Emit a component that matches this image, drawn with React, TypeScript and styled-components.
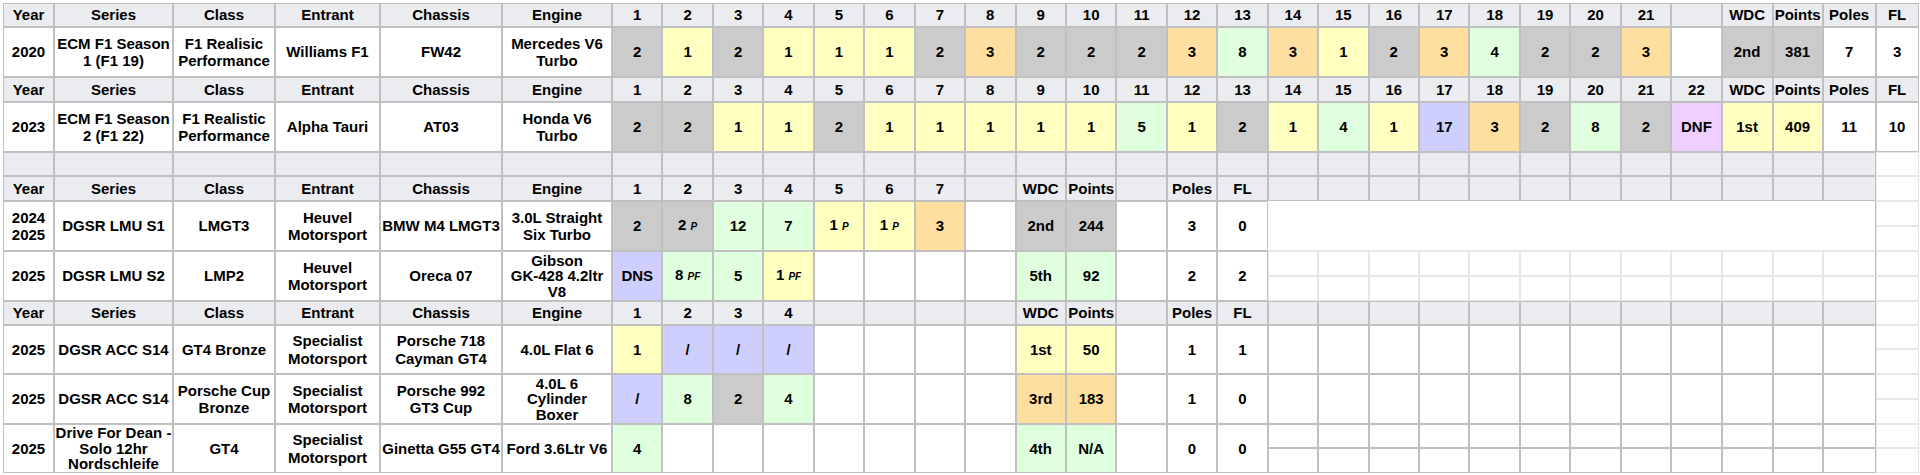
import React from "react";
import styled, { createGlobalStyle, css } from "styled-components";

type Tone = "none" | "head" | "gold" | "silver" | "bronze" | "green" | "purple" | "pink";
type Line = "dark" | "light" | "open";
type Res = [string, Tone, string?];

const tones: Record<Tone, string> = {
  none: "#ffffff",
  head: "#eaecf0",
  gold: "#ffffbf",
  silver: "#cbcbcb",
  bronze: "#ffdf9f",
  green: "#dfffdf",
  purple: "#cfcfff",
  pink: "#efcfff",
};

const DARK = "#c0c0c0";
const LIGHT = "#e7e7e7";

// column widths: info columns, 22 rounds, then WDC / Points / Poles / FL
const COLS = [51, 119, 102, 105, 122, 110, ...Array(22).fill(50.45), 51, 50, 53, 43];
// data rows take two grid rows, so the loose grid on the right can show its half rows
const ROWS = [24, 25, 25, 25, 25, 25, 24, 25, 25, 25, 25, 25, 24, 24, 25, 25, 25, 24, 25];

const GlobalStyle = createGlobalStyle`
  html, body {
    margin: 0;
    padding: 0;
    background: #ffffff;
  }
  body {
    font-family: "Liberation Sans", Arial, sans-serif;
  }
`;

const Sheet = styled.div`
  display: grid;
  grid-template-columns: ${COLS.map((w) => `${w}px`).join(" ")};
  grid-template-rows: ${ROWS.map((h) => `${h}px`).join(" ")};
  padding: 3px 0 0 3px;
  width: max-content;
`;

const Cell = styled.div<{
  $c: number;
  $r: number;
  $cs?: number;
  $rs?: number;
  $tone?: Tone;
  $line?: Line;
  $edge?: boolean;
}>`
  grid-column: ${(p) => p.$c} / span ${(p) => p.$cs ?? 1};
  grid-row: ${(p) => p.$r} / span ${(p) => p.$rs ?? 1};
  box-sizing: border-box;
  display: flex;
  align-items: center;
  justify-content: center;
  overflow: hidden;
  padding: 0 1px;
  background: ${(p) => tones[p.$tone ?? "none"]};
  border: 1px solid ${(p) => (p.$line === "light" ? LIGHT : DARK)};
  ${(p) =>
    p.$line === "open" &&
    css`
      border-width: 0 1px 1px 0;
      border-bottom-color: ${LIGHT};
    `}
  ${(p) =>
    p.$edge &&
    css`
      border-right-color: ${DARK};
    `}
`;

const Label = styled.span<{ $tight?: boolean }>`
  text-align: center;
  white-space: pre;
  font-size: 15px;
  font-weight: bold;
  line-height: ${(p) => (p.$tight ? "15.6px" : "17.5px")};
  color: #000000;
`;

const Sup = styled.span`
  font-size: 10px;
  font-style: italic;
  font-weight: bold;
`;

const G = (t: string, sup?: string): Res => [t, "gold", sup];
const S = (t: string, sup?: string): Res => [t, "silver", sup];
const B = (t: string): Res => [t, "bronze"];
const Pt = (t: string, sup?: string): Res => [t, "green", sup];
const NC = (t: string): Res => [t, "purple"];
const Ret = (t: string): Res => [t, "pink"];
const W = (t = ""): Res => [t, "none"];

const rounds = (n: number) => Array.from({ length: n }, (_, i) => String(i + 1));
const INFO_HEAD = ["Year", "Series", "Class", "Entrant", "Chassis", "Engine"];

const lowHead = (n: number) => {
  const r = rounds(n);
  while (r.length < 8) r.push("");
  return [...INFO_HEAD, ...r, "WDC", "Points", "", "Poles", "FL", ...Array(12).fill("")];
};

interface Season {
  row: number;
  info: string[];
  results: Res[];
  fill?: "open" | "light" | "full" | "half";
}

const headers: { row: number; labels: string[] }[] = [
  { row: 1, labels: [...INFO_HEAD, ...rounds(21), "", "WDC", "Points", "Poles", "FL"] },
  { row: 4, labels: [...INFO_HEAD, ...rounds(22), "WDC", "Points", "Poles", "FL"] },
  { row: 7, labels: Array(31).fill("") },
  { row: 8, labels: lowHead(7) },
  { row: 13, labels: lowHead(4) },
];

const seasons: Season[] = [
  {
    row: 2,
    info: ["2020", "ECM F1 Season\n1 (F1 19)", "F1 Realisic\nPerformance", "Williams F1", "FW42", "Mercedes V6\nTurbo"],
    results: [
      S("2"), G("1"), S("2"), G("1"), G("1"), G("1"), S("2"), B("3"), S("2"), S("2"), S("2"),
      B("3"), Pt("8"), B("3"), G("1"), S("2"), B("3"), Pt("4"), S("2"), S("2"), B("3"), W(),
      S("2nd"), S("381"), W("7"), W("3"),
    ],
  },
  {
    row: 5,
    info: ["2023", "ECM F1 Season\n2 (F1 22)", "F1 Realistic\nPerformance", "Alpha Tauri", "AT03", "Honda V6\nTurbo"],
    results: [
      S("2"), S("2"), G("1"), G("1"), S("2"), G("1"), G("1"), G("1"), G("1"), G("1"), Pt("5"),
      G("1"), S("2"), G("1"), Pt("4"), G("1"), NC("17"), B("3"), S("2"), Pt("8"), S("2"), Ret("DNF"),
      G("1st"), G("409"), W("11"), W("10"),
    ],
  },
  {
    row: 9,
    fill: "open",
    info: ["2024\n2025", "DGSR LMU S1", "LMGT3", "Heuvel\nMotorsport", "BMW M4 LMGT3", "3.0L Straight\nSix Turbo"],
    results: [
      S("2"), S("2", "P"), Pt("12"), Pt("7"), G("1", "P"), G("1", "P"), B("3"), W(),
      S("2nd"), S("244"), W(), W("3"), W("0"),
    ],
  },
  {
    row: 11,
    fill: "light",
    info: ["2025", "DGSR LMU S2", "LMP2", "Heuvel\nMotorsport", "Oreca 07", "Gibson\nGK-428 4.2ltr\nV8"],
    results: [
      NC("DNS"), Pt("8", "PF"), Pt("5"), G("1", "PF"), W(), W(), W(), W(),
      Pt("5th"), Pt("92"), W(), W("2"), W("2"),
    ],
  },
  {
    row: 14,
    fill: "full",
    info: ["2025", "DGSR ACC S14", "GT4 Bronze", "Specialist\nMotorsport", "Porsche 718\nCayman GT4", "4.0L Flat 6"],
    results: [
      G("1"), NC("/"), NC("/"), NC("/"), W(), W(), W(), W(),
      G("1st"), G("50"), W(), W("1"), W("1"),
    ],
  },
  {
    row: 16,
    fill: "full",
    info: ["2025", "DGSR ACC S14", "Porsche Cup\nBronze", "Specialist\nMotorsport", "Porsche 992\nGT3 Cup", "4.0L 6\nCylinder\nBoxer"],
    results: [
      NC("/"), Pt("8"), S("2"), Pt("4"), W(), W(), W(), W(),
      B("3rd"), B("183"), W(), W("1"), W("0"),
    ],
  },
  {
    row: 18,
    fill: "half",
    info: ["2025", "Drive For Dean -\nSolo 12hr\nNordschleife", "GT4", "Specialist\nMotorsport", "Ginetta G55 GT4", "Ford 3.6Ltr V6"],
    results: [
      Pt("4"), W(), W(), W(), W(), W(), W(), W(),
      Pt("4th"), Pt("N/A"), W(), W("0"), W("0"),
    ],
  },
];

const buildCells = () => {
  const cells: React.ReactNode[] = [];
  let key = 0;

  headers.forEach(({ row, labels }) =>
    labels.forEach((label, i) =>
      cells.push(
        <Cell key={key++} $c={i + 1} $r={row} $tone="head">
          <Label>{label}</Label>
        </Cell>
      )
    )
  );

  seasons.forEach(({ row, info, results, fill }) => {
    info.forEach((text, i) =>
      cells.push(
        <Cell key={key++} $c={i + 1} $r={row} $rs={2}>
          <Label $tight={text.split("\n").length > 2}>{text}</Label>
        </Cell>
      )
    );
    results.forEach(([text, tone, sup], i) =>
      cells.push(
        <Cell key={key++} $c={i + 7} $r={row} $rs={2} $tone={tone}>
          <Label>
            {text}
            {sup && (
              <>
                {" "}
                <Sup>{sup}</Sup>
              </>
            )}
          </Label>
        </Cell>
      )
    );

    if (fill === "open") {
      cells.push(<Cell key={key++} $c={20} $cs={12} $r={row} $rs={2} $line="open" />);
    }
    for (let c = 20; c <= 31; c++) {
      if (fill === "full") cells.push(<Cell key={key++} $c={c} $r={row} $rs={2} />);
      if (fill === "half" || fill === "light") {
        const line: Line = fill === "light" ? "light" : "dark";
        cells.push(<Cell key={key++} $c={c} $r={row} $line={line} $edge={c === 31} />);
        cells.push(<Cell key={key++} $c={c} $r={row + 1} $line={line} $edge={c === 31} />);
      }
    }
  });

  // loose spreadsheet grid to the right of the lower tables
  for (let r = 7; r <= 19; r++) {
    cells.push(<Cell key={key++} $c={32} $r={r} $line="light" />);
  }

  return cells;
};

export default function App() {
  return (
    <>
      <GlobalStyle />
      <Sheet>{buildCells()}</Sheet>
    </>
  );
}
